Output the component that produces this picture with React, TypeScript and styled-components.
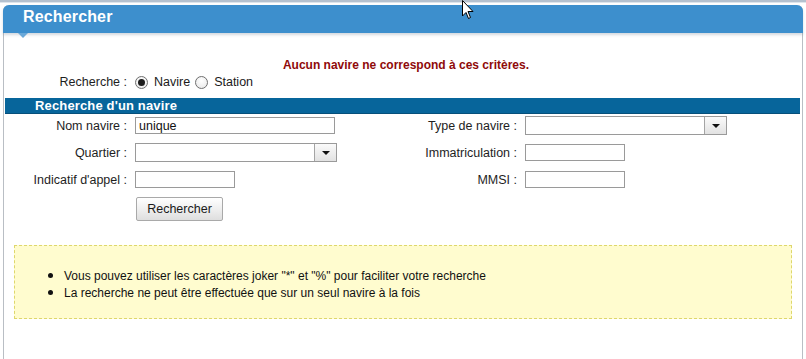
import React from "react";
import styled, { createGlobalStyle } from "styled-components";

const GlobalStyle = createGlobalStyle`
  html, body { margin: 0; padding: 0; background: #ffffff; }
  body {
    font-family: "Liberation Sans", Arial, sans-serif;
    font-size: 12.5px;
    color: #1a1a1a;
  }
`;

const Page = styled.div`
  position: relative;
  width: 806px;
  height: 359px;
  overflow: hidden;
  background: #fff;
`;

const TopStrip = styled.div`
  height: 2px;
  background: #b4c1cf;
  border-bottom: 1px solid #dfe5ec;
  margin-bottom: 2px;
`;

const Panel = styled.div`
  position: relative;
  margin: 0 3px;
  height: 360px;
  border-left: 1px solid #b9bec4;
  border-right: 1px solid #b9bec4;
  border-top-left-radius: 6px;
  border-top-right-radius: 6px;
`;

const Header = styled.div`
  position: relative;
  height: 28px;
  margin: 0 -1px;
  background: #3d8fcd;
  border-radius: 6px 6px 0 0;
  box-shadow: 0 2px 3px rgba(60, 80, 110, 0.22);
`;

const Title = styled.h1`
  margin: 0;
  padding-left: 20px;
  font-size: 16px;
  letter-spacing: 0.15px;
  font-weight: bold;
  line-height: 23px;
  color: #ffffff;
`;

const Notch = styled.span`
  position: absolute;
  left: 15px;
  bottom: -5px;
  width: 0;
  height: 0;
  border-left: 5px solid transparent;
  border-right: 5px solid transparent;
  border-top: 5px solid #6aa8d8;
`;

const Message = styled.p`
  margin: 25px 0 0;
  text-align: center;
  font-size: 12px;
  line-height: 14px;
  font-weight: bold;
  color: #8f0a0a;
  padding-left: 6px;
`;

const FormGrid = styled.div`
  display: grid;
  grid-template-columns: 130px 260px 130px 1fr;
  grid-auto-rows: 19px;
  row-gap: 8px;
  align-items: center;
  margin-left: 1px;
`;

const ModeRow = styled(FormGrid)`
  margin-top: 3px;
  grid-auto-rows: 14px;
`;

const Label = styled.label`
  text-align: right;
  padding-right: 8px;
  white-space: nowrap;
  color: #1e1e1e;
`;

const RadioGroup = styled.div`
  display: flex;
  align-items: center;
  grid-column: span 3;
  white-space: nowrap;
`;

const Radio = styled.input.attrs({ type: "radio" })`
  appearance: none;
  margin: 0 6px 0 0;
  width: 13px;
  height: 13px;
  border-radius: 50%;
  border: 1px solid #6f6f6f;
  background: radial-gradient(circle at 50% 35%, #ffffff, #e6e6e6);
  box-sizing: border-box;
  display: grid;
  place-items: center;
  &:checked::after {
    content: "";
    width: 7px;
    height: 7px;
    border-radius: 50%;
    background: #1c1c1c;
  }
`;

const RadioText = styled.span<{ $gap?: number }>`
  margin-right: ${(p) => p.$gap ?? 0}px;
`;

const SectionBar = styled.div`
  margin: 9px 2px 2px 1px;
  height: 16px;
  background: #07659b;
  border-bottom: 1px solid #064f7a;
  box-sizing: border-box;
  padding-left: 30px;
  font-size: 13px;
  letter-spacing: 0.15px;
  font-weight: bold;
  color: #ffffff;
  line-height: 15px;
`;

const TextInput = styled.input.attrs({ type: "text" })<{ $w: number }>`
  width: ${(p) => p.$w}px;
  height: 17px;
  box-sizing: border-box;
  border: 1px solid #9a9a9a;
  padding: 0 3px;
  margin: 0;
  font-family: "Liberation Sans", Arial, sans-serif;
  font-size: 12.5px;
  color: #111;
  background: #fff;
  outline: none;
`;

const SelectBox = styled.div<{ $w: number }>`
  display: flex;
  width: ${(p) => p.$w}px;
  height: 19px;
  box-sizing: border-box;
  border: 1px solid #9a9a9a;
  background: #fff;
`;

const SelectValue = styled.div`
  flex: 1;
`;

const SelectArrow = styled.div`
  width: 21px;
  border-left: 1px solid #a4a4a4;
  background: linear-gradient(#fafafa, #e2e2e2);
  display: flex;
  align-items: center;
  justify-content: center;
  &::after {
    content: "";
    border-left: 4px solid transparent;
    border-right: 4px solid transparent;
    border-top: 4px solid #111;
  }
`;

const Cell = styled.div`
  display: flex;
  align-items: center;
`;

const ButtonRow = styled.div`
  padding-left: 132px;
  margin-top: 8px;
`;

const Button = styled.button`
  width: 87px;
  height: 24px;
  border: 1px solid #a9a9a9;
  border-radius: 2px;
  background: linear-gradient(#ffffff, #ececec 60%, #dedede);
  font-family: "Liberation Sans", Arial, sans-serif;
  font-size: 12.5px;
  color: #1a1a1a;
  padding: 0;
`;

const InfoBox = styled.div`
  margin: 24px 10px 0 10px;
  height: 74px;
  box-sizing: border-box;
  background: #fffccf;
  border: 1px dashed #ded76c;
`;

const InfoList = styled.ul`
  margin: 21px 0 0;
  padding-left: 49px;
  font-size: 12px;
  line-height: 15px;
  color: #111;
  list-style: disc;
  li::marker {
    font-size: 15px;
  }
`;

const Cursor = styled.svg`
  position: absolute;
  left: 462px;
  top: 0;
`;

function Select({ w }: { w: number }) {
  return (
    <SelectBox $w={w}>
      <SelectValue />
      <SelectArrow />
    </SelectBox>
  );
}

export default function App() {
  return (
    <Page>
      <GlobalStyle />
      <TopStrip />
      <Panel>
        <Header>
          <Title>Rechercher</Title>
          <Notch />
        </Header>
        <Message>Aucun navire ne correspond à ces critères.</Message>
        <ModeRow>
          <Label>Recherche :</Label>
          <RadioGroup>
            <Radio name="mode" defaultChecked />
            <RadioText $gap={5}>Navire</RadioText>
            <Radio name="mode" />
            <RadioText>Station</RadioText>
          </RadioGroup>
        </ModeRow>
        <SectionBar>Recherche d'un navire</SectionBar>
        <FormGrid>
          <Label>Nom navire :</Label>
          <Cell>
            <TextInput $w={200} defaultValue="unique" />
          </Cell>
          <Label>Type de navire :</Label>
          <Cell>
            <Select w={202} />
          </Cell>

          <Label>Quartier :</Label>
          <Cell>
            <Select w={202} />
          </Cell>
          <Label>Immatriculation :</Label>
          <Cell>
            <TextInput $w={100} />
          </Cell>

          <Label>Indicatif d'appel :</Label>
          <Cell>
            <TextInput $w={100} />
          </Cell>
          <Label>MMSI :</Label>
          <Cell>
            <TextInput $w={100} />
          </Cell>
        </FormGrid>
        <ButtonRow>
          <Button>Rechercher</Button>
        </ButtonRow>
        <InfoBox>
          <InfoList>
            <li>Vous pouvez utiliser les caractères joker "*" et "%" pour faciliter votre recherche</li>
            <li>La recherche ne peut être effectuée que sur un seul navire à la fois</li>
          </InfoList>
        </InfoBox>
      </Panel>
      <Cursor width="12" height="20" viewBox="0 0 12 20">
        <path d="M0.5 0.5 L0.5 16 L4 12.5 L6.5 18.5 L8.5 17.5 L6 11.5 L11 11.5 Z" fill="#ffffff" stroke="#000000" strokeWidth="1" />
      </Cursor>
    </Page>
  );
}
